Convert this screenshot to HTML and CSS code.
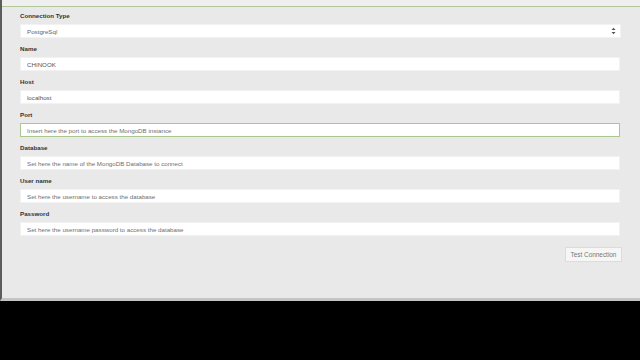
FILE: index.html
```html
<html>
<head>
	<link rel="stylesheet" href="styles.css">
</head>
<body>

	<div class="panel">
		<div class="topbar"></div>

		<form class="form">
			<div class="field">
				<label>Connection Type</label>
				<div class="select">
					<span class="value">PostgreSql</span>
					<svg class="arrows" width="5" height="8" viewBox="0 0 5 8">
						<path d="M0.5 3 L2.5 0.8 L4.5 3 Z" fill="#555"/>
						<path d="M0.5 5 L2.5 7.2 L4.5 5 Z" fill="#555"/>
					</svg>
				</div>
			</div>
			<div class="field">
				<label>Name</label>
				<input type="text" value="CHINOOK">
			</div>
			<div class="field">
				<label>Host</label>
				<input type="text" value="localhost">
			</div>
			<div class="field">
				<label>Port</label>
				<input class="focused" type="text" placeholder="Insert here the port to access the MongoDB instance">
			</div>
			<div class="field">
				<label>Database</label>
				<input type="text" placeholder="Set here the name of the MongoDB Database to connect">
			</div>
			<div class="field">
				<label>User name</label>
				<input type="text" placeholder="Set here the username to access the database">
			</div>
			<div class="field">
				<label>Password</label>
				<input type="password" placeholder="Set here the username password to access the database">
			</div>

			<div class="actions">
				<button type="button">Test Connection</button>
			</div>
		</form>
	</div>

</body>
</html>
```

FILE: styles.css
```css
* {
	margin: 0;
	padding: 0;
	box-sizing: border-box;
}
body {
	background: #000;
	font-family: "Liberation Sans", Arial, sans-serif;
	height: 360px;
	overflow: hidden;
}

.panel {
	height: 301px;
	background: #e9e9e9;
	border-left: 2px solid #5c5c5c;
	border-bottom: 3px solid #c4c4c4;
}

.topbar {
	height: 7px;
	background: #efefef;
	border-bottom: 1px solid #b2c79c;
}

.form {
	padding: 5px 20px 0 18px;
}

.field {
	margin-bottom: 7px;
}

.field label {
	display: block;
	height: 8px;
	line-height: 8px;
	margin-bottom: 4px;
	font-size: 6.2px;
	font-weight: bold;
	color: #333;
}

.field input,
.select {
	display: block;
	width: 100%;
	height: 14px;
	padding: 0 6px;
	background: #fff;
	border: 1px solid #f2f2f2;
	font-family: "Liberation Sans", Arial, sans-serif;
	font-size: 6.2px;
	color: #555;
	outline: none;
}

.field input::placeholder {
	color: #6f6f6f;
}

.field input.focused {
	border-color: #a9c78f;
}

.select {
	display: flex;
	align-items: center;
	justify-content: space-between;
	width: calc(100% + 1px);
	padding: 0 4px 0 6px;
}

.select .value {
	color: #666;
}

.actions {
	display: flex;
	justify-content: flex-end;
	padding-top: 4px;
}

.actions button {
	width: 57px;
	height: 15px;
	margin-right: -2px;
	background: #f6f6f6;
	border: 1px solid #dcdcdc;
	font-family: "Liberation Sans", Arial, sans-serif;
	font-size: 6.4px;
	color: #777;
}
```
